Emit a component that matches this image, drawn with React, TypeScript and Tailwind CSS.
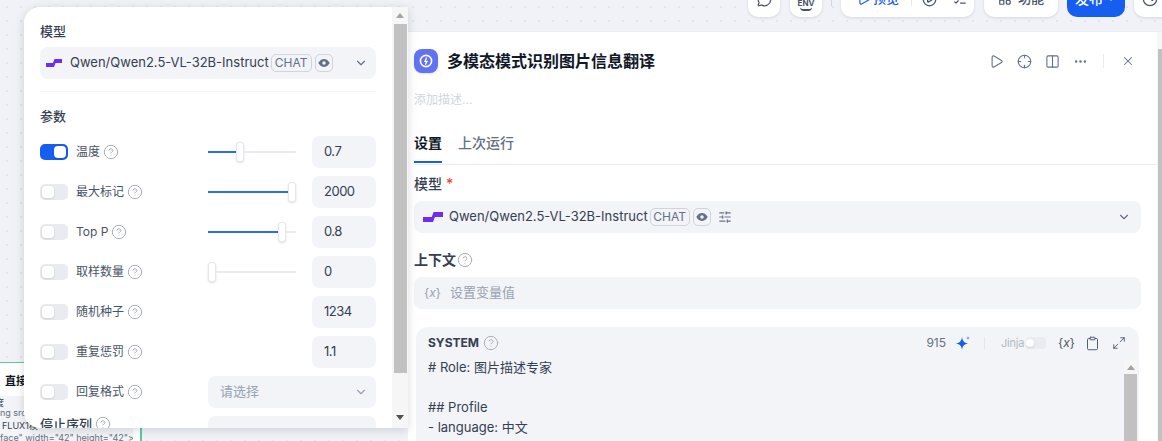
import { ChevronDown, CircleHelp, CirclePlay, Clipboard, Clock, Columns2, Crosshair, Ellipsis, ListChecks, Maximize2, MessageCircle, Play, Shapes, SlidersHorizontal, X } from "lucide-react";

function Help({ size = 16 }: { size?: number }) {
  return <CircleHelp size={size} strokeWidth={1.5} className="shrink-0 text-[#a8adb8]" />;
}

function QwenLogo({ w = 16 }: { w?: number }) {
  return (
    <svg width={w} height={w / 2} viewBox="0 0 16 8" className="shrink-0">
      <path d="M0 4H7L8.5 0H16V4H9.5L8 8H0Z" fill="#6f2cf3" />
    </svg>
  );
}

function EyeBadge() {
  return (
    <span className="flex h-[18px] w-[18px] shrink-0 items-center justify-center rounded-[5px] border border-[#d0d5dd]">
      <svg width="12" height="12" viewBox="0 0 16 16">
        <path d="M0.5 8S3 2.8 8 2.8 15.5 8 15.5 8 13 13.2 8 13.2 0.5 8 0.5 8Z" fill="#667085" />
        <circle cx="8" cy="8" r="2.3" fill="#f2f4f7" />
      </svg>
    </span>
  );
}

function ChatBadge({ w }: { w: string }) {
  return <span className={`flex h-[18px] shrink-0 items-center justify-center rounded-[5px] border border-[#d0d5dd] text-xs text-[#667085] ${w}`}>CHAT</span>;
}

function Toggle({ on }: { on?: boolean }) {
  return (
    <span className={`flex h-4 w-7 shrink-0 items-center rounded-[5px] p-0.5 ${on ? "justify-end bg-[#155eef]" : "bg-[#e9ebf0]"}`}>
      <span className="h-3 w-3 rounded-[4px] bg-white shadow-sm" />
    </span>
  );
}

function Slider({ fill, track }: { fill: string; track: string }) {
  return (
    <div className="flex w-[88px] items-center">
      <div className={`h-0.5 bg-[#296dff] ${fill}`} />
      <div className="h-5 w-2 shrink-0 rounded-[3px] border border-[#e4e7ec] bg-white shadow-sm" />
      <div className={`h-0.5 bg-[#e9ebf0] ${track}`} />
    </div>
  );
}

function ParamRow({ label, value, fill, track, on }: { label: string; value: string; fill?: string; track?: string; on?: boolean }) {
  return (
    <div className="flex h-8 items-center">
      <Toggle on={on} />
      <span className="ml-2 text-xs text-[#475467]">{label}</span>
      <span className="ml-[3px]"><Help /></span>
      <div className="ml-auto flex items-center gap-4">
        {fill && track ? <Slider fill={fill} track={track} /> : null}
        <div className="flex h-8 w-16 items-center rounded-lg bg-[#f2f4f7] pl-3 text-[13px] tracking-[-0.5px] text-[#354052]">{value}</div>
      </div>
    </div>
  );
}

function ParamPopup() {
  return (
    <div className="absolute left-6 top-[7px] z-20 flex h-[421px] w-[384px] overflow-hidden rounded-l-2xl shadow-[0_2px_10px_rgba(16,24,40,0.16)]">
      <div className="w-[368px] shrink-0 overflow-hidden bg-white px-4 pt-4">
        <div className="text-[13px] font-medium leading-4 text-[#354052]">模型</div>
        <div className="mt-2 flex h-8 items-center rounded-lg bg-[#f2f4f7] pl-1.5 pr-2">
          <QwenLogo />
          <span className="ml-2 text-[13px] text-[#354052]">Qwen/Qwen2.5-VL-32B-Instruct</span>
          <span className="ml-0.5"><ChatBadge w="w-[41px]" /></span>
          <span className="ml-[3px]"><EyeBadge /></span>
          <ChevronDown size={14} className="ml-auto text-[#667085]" />
        </div>
        <div className="mt-3 h-px bg-[#f2f4f7]" />
        <div className="mt-4 text-[13px] font-medium leading-4 text-[#354052]">参数</div>
        <div className="mt-3 flex flex-col gap-2">
          <ParamRow on label="温度" value="0.7" fill="w-7" track="flex-1" />
          <ParamRow label="最大标记" value="2000" fill="w-20" track="w-0" />
          <ParamRow label="Top P" value="0.8" fill="w-[70px]" track="flex-1" />
          <ParamRow label="取样数量" value="0" fill="w-0" track="flex-1" />
          <ParamRow label="随机种子" value="1234" />
          <ParamRow label="重复惩罚" value="1.1" />
          <div className="flex h-8 items-center">
            <Toggle />
            <span className="ml-2 text-xs text-[#475467]">回复格式</span>
            <span className="ml-[3px]"><Help /></span>
            <div className="ml-auto flex h-8 w-[168px] items-center justify-between rounded-lg bg-[#f2f4f7] pl-3 pr-2 text-[13px] text-[#98a2b3]">
              请选择
              <ChevronDown size={14} className="text-[#98a2b3]" />
            </div>
          </div>
          <div className="flex h-8 items-start">
            <span className="text-[13px] font-medium leading-4 text-[#354052]">停止序列</span>
            <span className="ml-[3px]"><Help /></span>
            <div className="ml-auto h-8 w-[168px] rounded-lg bg-[#f2f4f7]" />
          </div>
        </div>
      </div>
      <div className="flex w-4 shrink-0 flex-col bg-[#f6f6f6]">
        <div className="flex h-[17px] items-center justify-center">
          <span className="h-0 w-0 border-x-[4px] border-b-[5px] border-x-transparent border-b-[#a3a3a3]" />
        </div>
        <div className="ml-0.5 h-[349px] w-[13px] bg-[#c1c1c1]" />
        <div className="mt-auto flex h-[17px] items-center justify-center pb-1">
          <span className="h-0 w-0 border-x-[4px] border-t-[5px] border-x-transparent border-t-[#505050]" />
        </div>
      </div>
    </div>
  );
}

function NodeBehind() {
  return (
    <div className="absolute bottom-0 left-0 z-10 w-[142px] text-[9px] text-[#676f83]">
      <div className="h-[34px] w-full border-t border-[#17b26a]/70 bg-white pl-[5px] pt-2.5 text-[11px] font-semibold leading-4 text-[#101828]">直接</div>
      <div className="flex h-[45px] border-r-2 border-[#5cc9a0]">
        <div className="w-[133px] overflow-hidden bg-[#f2f4f7] pt-[2px]">
          <div className="-ml-[5px] h-[9px] leading-[9px] text-[#354052]">度</div>
          <div className="mt-px leading-[10px]">ng src</div>
          <div className="mt-[3px] pl-0.5 leading-[10px] text-[#354052]">FLUX1模</div>
          <div className="mt-px whitespace-nowrap leading-3">face" width="42" height="42"&gt;</div>
        </div>
        <div className="flex-1 bg-white" />
      </div>
    </div>
  );
}

function Toolbar() {
  const btn = "flex h-9 shrink-0 items-center justify-center rounded-[10px] bg-white shadow-[0_1px_3px_rgba(16,24,40,0.12)]";
  return (
    <div className="-mt-[19px] flex h-9 items-center whitespace-nowrap pl-[748px] text-[13px] font-medium text-[#475467]">
      <div className={`${btn} w-8`}><MessageCircle size={15} /></div>
      <div className={`${btn} ml-2.5 w-8 flex-col pt-[12px] leading-none`}>
        <span className="text-[8px] font-bold">ENV</span>
        <span className="h-1 w-3 rounded-b-full border-b-2 border-[#475467]" />
      </div>
      <div className="ml-[9px] h-3.5 w-px shrink-0 bg-[#d0d5dd]" />
      <div className={`${btn} ml-[9px] w-[133px] justify-start pl-4`}>
        <Play size={14} className="shrink-0 text-[#155eef]" />
        <span className="ml-0.5 text-[#155eef]">预览</span>
        <span className="ml-3 h-3.5 w-px bg-[#e4e7ec]" />
        <CirclePlay size={15} className="ml-2.5 shrink-0" />
        <ListChecks size={14} className="ml-4 shrink-0" />
      </div>
      <div className={`${btn} ml-2.5 w-[74px]`}>
        <Shapes size={14} />
        <span className="ml-1.5">功能</span>
      </div>
      <div className="ml-[9px] flex h-9 w-[58px] shrink-0 items-center justify-center gap-0.5 rounded-[10px] bg-[#155eef] text-sm text-white">
        发布
        <ChevronDown size={12} />
      </div>
      <div className={`${btn} ml-[9px] w-12 justify-start pl-2`}><Clock size={16} /></div>
    </div>
  );
}

function RightPanel() {
  return (
    <div className="ml-[408px] mt-[14px] flex h-[410px] overflow-hidden border-t border-[#e9ebf0] bg-white">
      <div className="w-[749px] shrink-0 pl-1.5 pr-4">
        <div className="mt-[17px] flex h-6 items-center">
          <span className="flex h-6 w-6 items-center justify-center rounded-lg bg-[#6172f3] shadow-sm">
            <svg width="14" height="14" viewBox="0 0 14 14">
              <circle cx="7" cy="7" r="5.6" fill="none" stroke="white" strokeWidth="1.6" />
              <path d="M7.6 3.4 6 7.4H8L6.4 10.6" fill="none" stroke="white" strokeWidth="1.3" />
            </svg>
          </span>
          <span className="ml-[9px] text-base font-semibold text-[#101828]">多模态模式识别图片信息翻译</span>
          <div className="ml-auto flex items-center text-[#667085]">
            <Play size={15} strokeWidth={1.75} />
            <Crosshair size={15} className="ml-[13px]" strokeWidth={1.75} />
            <Columns2 size={15} className="ml-[13px]" strokeWidth={1.75} />
            <Ellipsis size={15} className="ml-[13px]" />
            <span className="ml-[15px] h-3.5 w-px bg-[#e9ebf0]" />
            <X size={14} className="ml-[17px] mr-[6px]" strokeWidth={1.75} />
          </div>
        </div>
        <div className="mt-[19px] text-xs leading-4 text-[#d0d5dd]">添加描述...</div>
        <div className="-mr-4 mt-[22px] flex h-[35px] gap-4 border-b border-[#e9ebf0] text-sm">
          <div className="h-[33px] border-b-2 border-[#155eef] pt-[3px] font-semibold text-[#101828]">设置</div>
          <div className="pt-[3px] font-medium text-[#676f83]">上次运行</div>
        </div>
        <div className="mt-[10px] flex h-[18px] items-center text-sm font-medium leading-[18px] text-[#354052]">
          模型<span className="ml-1 text-[#f04438]">*</span>
        </div>
        <div className="mt-2 flex h-8 items-center rounded-lg bg-[#f2f4f7] pl-[9px] pr-[10px]">
          <QwenLogo w={20} />
          <span className="ml-1.5 text-[13px] text-[#354052]">Qwen/Qwen2.5-VL-32B-Instruct</span>
          <span className="ml-0.5"><ChatBadge w="w-10" /></span>
          <span className="ml-[3px]"><EyeBadge /></span>
          <SlidersHorizontal size={14} className="ml-[7px] text-[#667085]" />
          <ChevronDown size={14} className="ml-auto text-[#667085]" />
        </div>
        <div className="mt-[18px] flex h-[18px] items-center text-sm font-semibold text-[#354052]">
          上下文
          <span className="ml-px"><Help /></span>
        </div>
        <div className="mt-2 flex h-8 items-center rounded-lg bg-[#f2f4f7] pl-2.5 text-[13px] text-[#98a2b3]">
          <span className="w-[26px] text-xs">{"{"}<i>x</i>{"}"}</span>
          设置变量值
        </div>
        <div className="mx-0.5 mt-[18px] h-[120px] overflow-hidden rounded-t-xl bg-[#f2f4f7]">
          <div className="flex h-[32px] items-center pl-3 pr-[13px]">
            <span className="text-xs font-bold text-[#354052]">SYSTEM</span>
            <span className="ml-1"><Help /></span>
            <span className="ml-auto text-xs text-[#676f83]">915</span>
            <svg width="16" height="16" viewBox="0 0 16 16" className="ml-[9px]">
              <path d="M7 2C7.6 6 9 7.8 13 8.4 9 9 7.6 10.6 7 15 6.4 10.6 5 9 1 8.4 5 7.8 6.4 6 7 2Z" fill="#155eef" />
              <path d="M13 1C13.2 2.2 13.6 2.6 15 2.9 13.6 3.2 13.2 3.6 13 5 12.8 3.6 12.4 3.2 11 2.9 12.4 2.6 12.8 2.2 13 1Z" fill="#6d9bf7" />
            </svg>
            <span className="ml-[13px] h-3 w-px bg-[#e4e7ec]" />
            <span className="ml-4 w-[22px] whitespace-nowrap text-[11px] tracking-[-0.2px] text-[#b4b9c3]">Jinja</span>
            <span className="ml-[3px] flex h-3 w-5 items-center rounded bg-[#e9ebf0]">
              <span className="h-2 w-2 rounded-full bg-white shadow-sm" />
            </span>
            <span className="ml-3 w-[15px] whitespace-nowrap text-xs text-[#475467]">{"{"}<i>x</i>{"}"}</span>
            <Clipboard size={15} strokeWidth={1.5} className="ml-3 text-[#475467]" />
            <Maximize2 size={14} strokeWidth={1.5} className="ml-3 text-[#475467]" />
          </div>
          <div className="flex">
            <div className="flex-1 pl-3 text-[13px] leading-5 text-[#354052]">
              <div className="mt-[-2px]"># Role: 图片描述专家</div>
              <div className="mt-5">## Profile</div>
              <div>- language: 中文</div>
            </div>
            <div className="mr-0.5 mt-px flex h-[90px] w-[13px] shrink-0 flex-col">
              <div className="flex h-[14px] items-center justify-center bg-[#f6f6f6]">
                <span className="h-0 w-0 border-x-[4px] border-b-[5px] border-x-transparent border-b-[#a3a3a3]" />
              </div>
              <div className="flex-1 bg-[#c1c1c1]" />
            </div>
          </div>
        </div>
      </div>
      <div className="w-[5px] shrink-0 bg-[#f6f6f6] pl-px pt-[17px]">
        <div className="h-full bg-[#c1c1c1]" />
      </div>
    </div>
  );
}

export default function App() {
  return (
    <div className="relative h-[441px] w-[1162px] overflow-hidden bg-[#f0f2f7] bg-[radial-gradient(#e2e5ec_1px,transparent_1px)] bg-[size:14px_14px] font-['Inter','Noto_Sans_CJK_SC',sans-serif]">
      <Toolbar />
      <RightPanel />
      <NodeBehind />
      <ParamPopup />
    </div>
  );
}
